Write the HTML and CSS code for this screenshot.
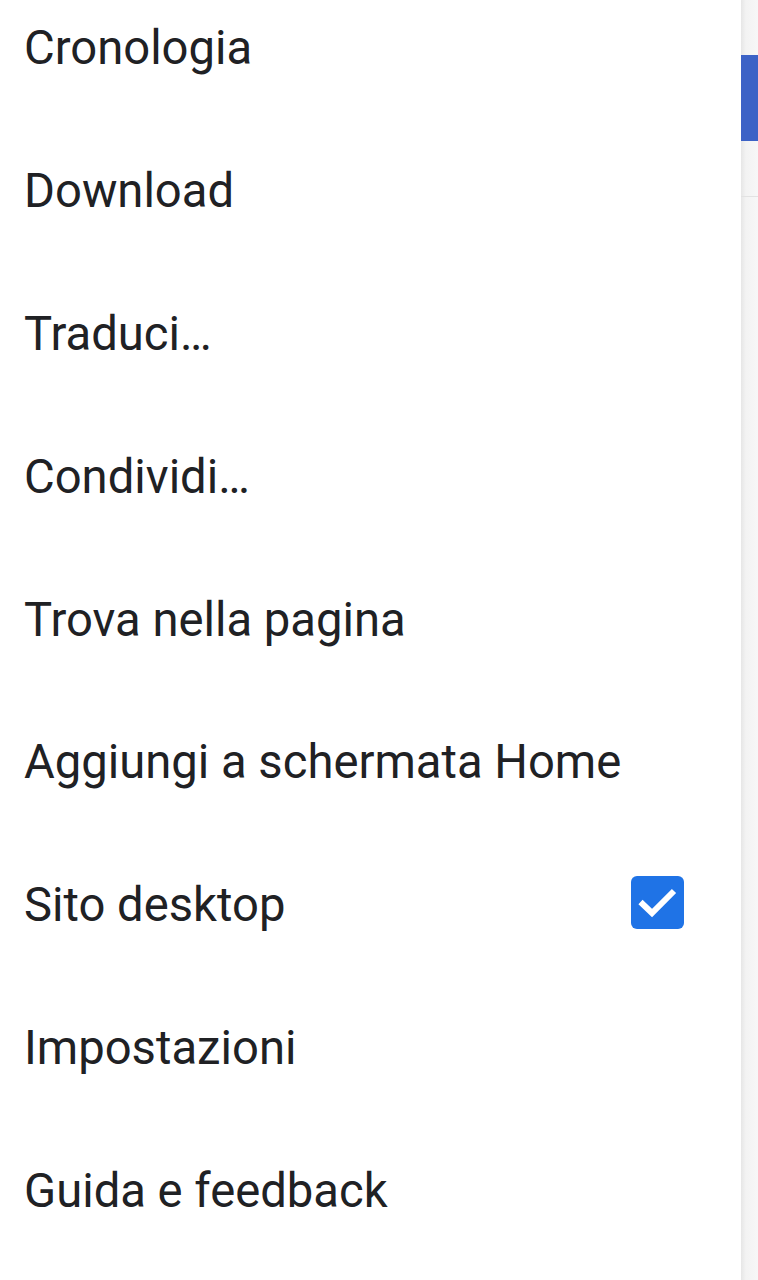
FILE: index.html
```html
<!DOCTYPE html>
<html lang="it">
<head>
<meta charset="utf-8">
<link rel="stylesheet" href="styles.css">
</head>
<body>
<div class="screen">
  <div class="menu">
    <ul class="list">
      <li class="item">Cronologia</li>
      <li class="item">Download</li>
      <li class="item">Traduci…</li>
      <li class="item">Condividi…</li>
      <li class="item">Trova nella pagina</li>
      <li class="item">Aggiungi a schermata Home</li>
      <li class="item">Sito desktop
        <span class="check">
          <svg width="53" height="53" viewBox="0 0 53 53"><rect x="0" y="0" width="53" height="53" rx="6" fill="#1f73e6"/><path d="M9.5 26 L21 37 L43 15" fill="none" stroke="#fff" stroke-width="6"/></svg>
        </span>
      </li>
      <li class="item">Impostazioni</li>
      <li class="item">Guida e feedback</li>
    </ul>
  </div>
  <div class="edge">
    <div class="edge-top"></div>
    <div class="edge-blue"></div>
    <div class="edge-gap"></div>
    <div class="edge-line"></div>
    <div class="edge-rest"></div>
  </div>
</div>
</body>
</html>
```
FILE: styles.css
```css
html, body {
  margin: 0;
  padding: 0;
  background: #fff;
}
.screen {
  display: flex;
  width: 758px;
  height: 1280px;
  overflow: hidden;
}
.menu {
  width: 741px;
  background: #fff;
  overflow: hidden;
}
.list {
  list-style: none;
  margin: -23px 0 0 0;
  padding: 0;
}
.item {
  height: 142.8px;
  display: flex;
  align-items: center;
  justify-content: space-between;
  padding: 0 57px 0 24px;
  font-family: Roboto, "Noto Sans", sans-serif;
  font-size: 47.2px;
  line-height: 54px;
  color: #202124;
}
.check {
  display: flex;
  width: 53px;
  height: 53px;
  margin-bottom: 6px;
}
.edge {
  width: 17px;
  display: flex;
  flex-direction: column;
  background: linear-gradient(to right, #e6e6e6 0px, #f3f3f3 5px, #f7f7f7 17px);
}
.edge-top { height: 55px; }
.edge-blue { height: 86px; background: #3c62c6; }
.edge-gap { height: 55px; }
.edge-line { height: 1px; background: #e2e2e2; }
.edge-rest { flex: 1; }
```
